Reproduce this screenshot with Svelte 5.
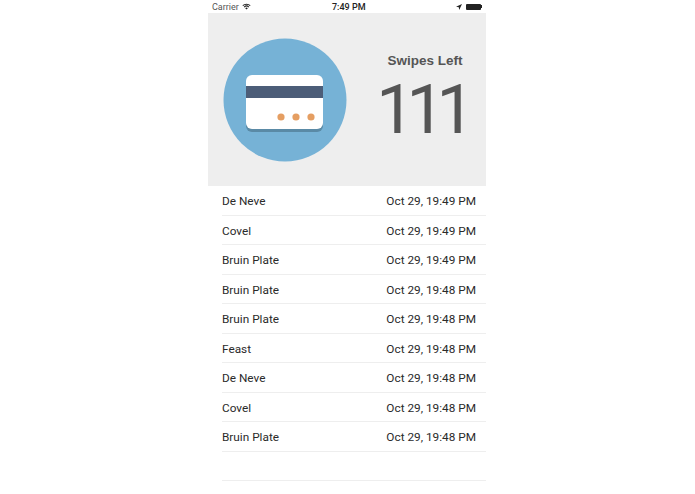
<script>
    const swipes = [
        ['De Neve', 'Oct 29, 19:49 PM'],
        ['Covel', 'Oct 29, 19:49 PM'],
        ['Bruin Plate', 'Oct 29, 19:49 PM'],
        ['Bruin Plate', 'Oct 29, 19:48 PM'],
        ['Bruin Plate', 'Oct 29, 19:48 PM'],
        ['Feast', 'Oct 29, 19:48 PM'],
        ['De Neve', 'Oct 29, 19:48 PM'],
        ['Covel', 'Oct 29, 19:48 PM'],
        ['Bruin Plate', 'Oct 29, 19:48 PM'],
        ['', '']
    ]
</script>

<div class="phone">
    <div class="status">
        <div class="status-left">
            <span>Carrier</span>
            <svg width="9" height="7" viewBox="0 0 11 8">
                <path d="M0.5 2.6 A7 7 0 0 1 10.5 2.6 L9.6 3.5 A5.8 5.8 0 0 0 1.4 3.5 Z" fill="#222" />
                <path d="M2.2 4.3 A4.6 4.6 0 0 1 8.8 4.3 L7.9 5.2 A3.3 3.3 0 0 0 3.1 5.2 Z" fill="#222" />
                <path d="M3.9 6 A2.2 2.2 0 0 1 7.1 6 L5.5 7.8 Z" fill="#222" />
            </svg>
        </div>
        <span class="clock">7:49 PM</span>
        <div class="status-right">
            <svg width="6" height="6" viewBox="0 0 6 6">
                <path d="M6 0 L0 2.8 L2.8 3.2 L3.2 6 Z" fill="#222" />
            </svg>
            <div class="battery"></div>
            <div class="battery-nub"></div>
        </div>
    </div>

    <div class="header">
        <svg class="badge" width="124" height="124" viewBox="0 0 124 124">
            <circle cx="62" cy="62" r="61.5" fill="#76b2d6" />
            <rect x="23" y="40" width="77" height="54" rx="6" fill="#5a8aa6" />
            <rect x="23" y="37" width="77" height="54" rx="6" fill="#fff" />
            <rect x="23" y="48" width="77" height="12" fill="#4c5d78" />
            <circle cx="58" cy="79" r="3.600" fill="#e59e62" />
            <circle cx="73" cy="79" r="3.600" fill="#e59e62" />
            <circle cx="88" cy="79" r="3.600" fill="#e59e62" />
        </svg>
        <div class="counter">
            <div class="counter-label">Swipes Left</div>
            <div class="counter-value">111</div>
        </div>
    </div>

    <ul class="list">
        {#each swipes as [place, time]}
            <li>
                <span>{place}</span>
                <span>{time}</span>
            </li>
        {/each}
    </ul>
</div>

<style>
    :global(body) {
        background: #fff;
        font-family: "Liberation Sans", Arial, sans-serif;
    }

    .phone {
        width: 278px;
        margin-left: 208px;
    }

    .status {
        height: 13px;
        display: flex;
        align-items: center;
        justify-content: space-between;
        padding: 0 4px;
        font-size: 9px;
        font-family: Roboto, sans-serif;
        color: #222;
        position: relative;
    }

    .status-left {
        display: flex;
        align-items: center;
        gap: 3px;
        color: #555;
    }

    .clock {
        font-weight: 500;
        font-size: 9px;
        position: absolute;
        left: 124px;
    }

    .status-right {
        display: flex;
        align-items: center;
    }

    .status-right svg {
        margin-right: 4px;
    }

    .battery {
        width: 15px;
        height: 6px;
        background: #222;
        border-radius: 1px;
    }

    .battery-nub {
        width: 1px;
        height: 3px;
        background: #222;
    }

    .header {
        height: 173px;
        background: #eeeeee;
        display: flex;
        align-items: center;
        padding-left: 15px;
    }

    .badge {
        flex: none;
    }

    .counter {
        flex: 1;
        display: flex;
        flex-direction: column;
        align-items: center;
        margin-left: 17px;
        margin-right: 0;
        color: #555;
    }

    .counter-label {
        font-size: 13.500px;
        font-weight: bold;
        margin-top: -1.500px;
    }

    .counter-value {
        font-family: Roboto, "Liberation Sans", sans-serif;
        font-weight: 400;
        font-size: 68px;
        line-height: 70px;
        letter-spacing: -8px;
        margin-top: 6.500px;
        margin-right: 7px;
    }

    .list {
        list-style: none;
        margin: 0;
        padding: 0 0 0 14px;
    }

    .list li {
        height: 29.500px;
        box-sizing: border-box;
        display: flex;
        align-items: center;
        justify-content: space-between;
        padding-top: 2px;
        padding-right: 10px;
        border-bottom: 1px solid #eeeeee;
        font-family: Roboto, sans-serif;
        font-size: 11.800px;
        color: #2a2a2a;
    }
</style>
